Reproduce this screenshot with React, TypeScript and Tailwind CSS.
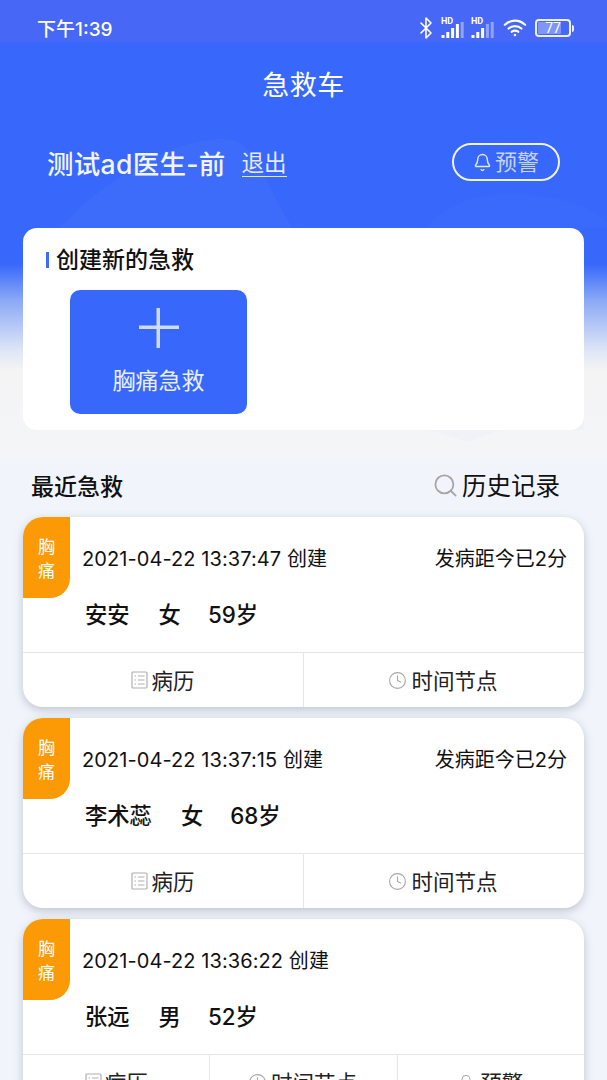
import { Bell, Bluetooth, Clock, Search } from 'lucide-react';

const FONT = "font-['Inter','Noto_Sans_CJK_SC','Noto_Sans',sans-serif]";

function Signal({ dim }: { dim?: boolean }) {
  const heights = [3, 6, 10, 14, 16];
  return (
    <div className="relative w-[24px] h-[24px]">
      <span className="absolute left-0 top-[1px] text-[9px] leading-[9px] font-bold text-white font-['Roboto',sans-serif]">HD</span>
      <svg className="absolute left-0 bottom-0" width="24" height="20" viewBox="0 0 24 20">
        {heights.map((h, i) => (
          <rect
            key={i}
            x={i * 4.8 + 0.5}
            y={18 - h}
            width="3"
            height={h}
            fill="#fff"
            opacity={dim ? (i > 2 ? 0.4 : 1) : i > 3 ? 0.4 : 1}
          />
        ))}
      </svg>
    </div>
  );
}

function StatusBar() {
  return (
    <div className="h-[42px] bg-[#4767f7] flex items-center justify-between pt-[14px] pl-[37px] pr-[33px] text-white">
      <span className="text-[19px] font-medium leading-none pt-[2px]">下午1:39</span>
      <div className="flex items-center">
        <Bluetooth size={24} strokeWidth={1.6} className="mr-[3px]" />
        <Signal />
        <div className="w-[6px]" />
        <Signal dim />
        <svg className="ml-[8px]" width="24" height="21" viewBox="0 0 26 22" fill="none" stroke="#fff" strokeWidth="2.4" strokeLinecap="round">
          <path d="M2 7C8.500 1 17.500 1 24 7" />
          <path d="M6 11C10 7.500 16 7.500 20 11" />
          <path d="M9.500 14.500C11.500 13 14.500 13 16.500 14.500" />
          <circle cx="13" cy="18" r="1.400" fill="#fff" stroke="none" />
        </svg>
        <div className="ml-[8px] w-[36px] h-[18px] rounded-[4px] border-2 border-white/90 p-[1px] relative">
          <div className="h-full w-[77%] bg-white/30 rounded-[1px]" />
          <span className="absolute inset-0 flex items-center justify-center text-[14px] leading-none font-['Roboto',sans-serif]">77</span>
        </div>
        <div className="ml-[1px] w-[2px] h-[7px] rounded-r-sm bg-white/90" />
      </div>
    </div>
  );
}

function Hero() {
  return (
    <div className="relative h-[428px] bg-[linear-gradient(180deg,#3768fb_0px,#3768fb_222px,#8aa8f6_258px,#dde5f6_308px,#f4f4f5_328px,#f4f5f7_403px,#f1f5fb_428px)] overflow-hidden">
      <svg className="absolute left-0 top-0" width="607" height="428" viewBox="0 0 607 428" fill="none">
        <path d="M60 186C110 130 190 90 232 98C252 104 262 125 271 148L292 186Z" fill="#fff" opacity="0.03" />
        <path d="M426 186C450 160 480 150 520 152C560 154 590 165 607 180V186Z" fill="#fff" opacity="0.02" />
        <path d="M430 388L468 400L520 380L584 330V388Z" fill="#3768fb" opacity="0.02" />
      </svg>
      <div className="relative">
        <h1 className="text-center text-[27px] font-normal leading-[40px] pt-[24px] text-white tracking-[0.5px]">急救车</h1>
        <div className="flex items-center h-[40px] mt-[36px] pl-[47px] pr-[47px]">
          <span className="text-[26.500px] leading-[36px] pt-[4px] tracking-[0.3px] font-medium text-[#f2f5ff]">测试ad医生-前</span>
          <span className="ml-[16px] text-[22.500px] leading-[26px] pt-[2px] text-[#e4eaff] border-b border-[#dfe6ff]">退出</span>
          <div className="ml-auto w-[108px] h-[38px] rounded-full border-2 border-[#f0f4ff] flex items-center justify-center gap-[3px] text-[#c5d3fd]">
            <Bell size={19} strokeWidth={1.8} className="text-[#e3e9fe]" />
            <span className="text-[22px] leading-none">预警</span>
          </div>
        </div>
        <div className="mx-[23px] mt-[46px] h-[202px] bg-white rounded-[14px] pt-[17px]">
          <div className="flex items-center pl-[23px]">
            <span className="w-[3px] h-[16px] bg-[#3f6cf7]" />
            <span className="ml-[7px] text-[23px] leading-[30px] font-medium text-[#111]">创建新的急救</span>
          </div>
          <button className="ml-[47px] mt-[15px] w-[177px] h-[124px] rounded-[10px] bg-[#3768fb] flex flex-col items-center text-[#e9eefe]">
            <svg className="mt-[18px]" width="40" height="40" viewBox="0 0 40 40">
              <path d="M17.500 0h3.500v40h-3.500zM0 17.500h40V21H0z" fill="#cfdafc" />
            </svg>
            <span className="mt-[18px] text-[23px] leading-[30px]">胸痛急救</span>
          </button>
        </div>
      </div>
    </div>
  );
}

function ActionCell({ icon, label }: { icon: 'record' | 'clock' | 'bell'; label: string }) {
  return (
    <div className="flex-1 flex items-center justify-center border-l border-[#e6e6e6] first:border-l-0 text-[#222]">
      {icon === 'record' && (
        <svg width="17" height="18" viewBox="0 0 17 18" fill="none" stroke="#b0b0b0" strokeWidth="1.2" className="mr-[3px]">
          <rect x="1" y="1" width="15" height="16" rx="1" />
          <path d="M3.500 5h1.500M7 5h6.500M3.500 9h1.500M7 9h6.500M3.500 13h1.500M7 13h6.500" />
        </svg>
      )}
      {icon === 'clock' && <Clock size={19} strokeWidth={1.4} className="text-[#a8a8a8] mr-[4px] ml-[-2px]" />}
      {icon === 'bell' && <Bell size={16} strokeWidth={1.5} className="text-[#a8a8a8] mr-[6px]" />}
      <span className="text-[21.500px] leading-none pt-[4px]">{label}</span>
    </div>
  );
}

interface RescueCardProps {
  created: string;
  onset?: string;
  name: string;
  sex: string;
  age: string;
  actions: { icon: 'record' | 'clock' | 'bell'; label: string }[];
}

function RescueCard({ created, onset, name, sex, age, actions }: RescueCardProps) {
  return (
    <div className="relative bg-white rounded-[20px] h-[190px] shadow-[0_3px_10px_rgba(60,70,100,0.28)] overflow-hidden flex flex-col shrink-0">
      <div className="absolute left-0 top-0 w-[47px] h-[81px] pt-[2px] bg-[#fb9a05] rounded-br-[20px] flex flex-col items-center justify-center text-white text-[17px] leading-[24px]">
        <span>胸</span>
        <span>痛</span>
      </div>
      <div className="flex justify-between pl-[59px] pr-[17px] pt-[27px] text-[#111] text-[20px] leading-[30px]">
        <span className="tracking-[0.08px]">{created} 创建</span>
        {onset && <span>{onset}</span>}
      </div>
      <div className="flex gap-[29px] pl-[62px] mt-[26px] text-[22.300px] leading-[30px] font-medium text-[#111]">
        <span>{name}</span>
        <span>{sex}</span>
        <span className="ml-[-2px]">{age}</span>
      </div>
      <div className="mt-auto h-[55px] border-t border-[#e6e6e6] flex">
        {actions.map((a) => (
          <ActionCell key={a.label} icon={a.icon} label={a.label} />
        ))}
      </div>
    </div>
  );
}

const twoActions: RescueCardProps['actions'] = [
  { icon: 'record', label: '病历' },
  { icon: 'clock', label: '时间节点' },
];

export default function App() {
  return (
    <div className={`w-[607px] h-[1080px] overflow-hidden bg-[#f1f5fb] ${FONT}`}>
      <StatusBar />
      <Hero />
      <div className="flex items-center justify-between pt-[2px] pl-[31px] pr-[47px] h-[30px]">
        <span className="text-[23px] font-medium text-[#111] leading-none pt-[2px]">最近急救</span>
        <div className="flex items-center">
          <Search size={27} strokeWidth={1.6} className="text-[#a5a5a5] mr-[3px] mb-[2px]" />
          <span className="text-[24.500px] text-[#111] leading-none">历史记录</span>
        </div>
      </div>
      <div className="flex flex-col gap-[11px] mx-[23px] mt-[17px]">
        <RescueCard created="2021-04-22 13:37:47" onset="发病距今已2分" name="安安" sex="女" age="59岁" actions={twoActions} />
        <RescueCard created="2021-04-22 13:37:15" onset="发病距今已2分" name="李术蕊" sex="女" age="68岁" actions={twoActions} />
        <RescueCard
          created="2021-04-22 13:36:22"
          name="张远"
          sex="男"
          age="52岁"
          actions={[...twoActions, { icon: 'bell', label: '预警' }]}
        />
      </div>
    </div>
  );
}
